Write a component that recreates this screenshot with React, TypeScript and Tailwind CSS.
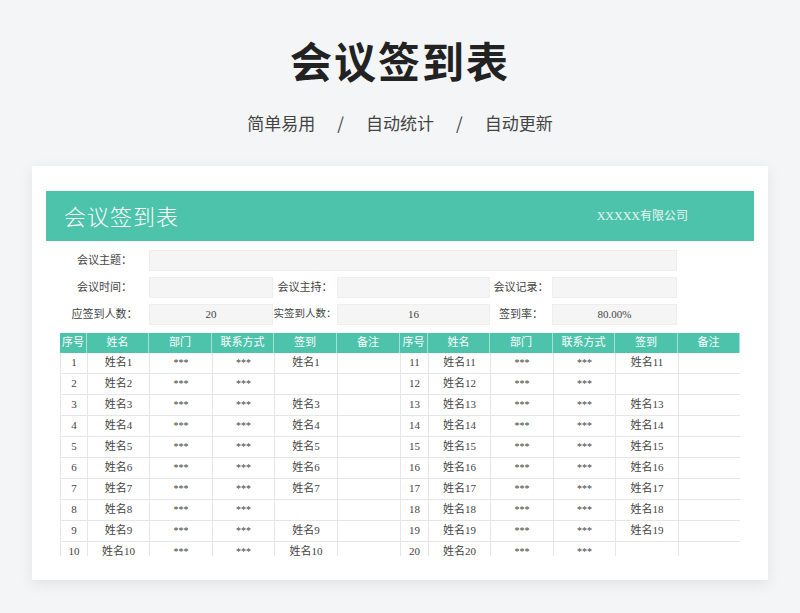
import React from 'react';

const cols = '27px 62px 63px 62px 63px 63px 28px 62px 63px 62px 63px 62px';
const heads = ['序号', '姓名', '部门', '联系方式', '签到', '备注'];
const signedLeft = [1, 3, 4, 5, 6, 7, 9, 10];
const signedRight = [11, 13, 14, 15, 16, 17, 18, 19];

const cell = 'flex items-center justify-center border-r border-b border-[#e6e6e6] whitespace-nowrap';

function Half({ n, signed }: { n: number; signed: boolean }) {
  return (
    <>
      <div className={cell}>{n}</div>
      <div className={cell}>姓名{n}</div>
      <div className={`${cell} text-[10px]`}>***</div>
      <div className={`${cell} text-[10px]`}>***</div>
      <div className={cell}>{signed ? `姓名${n}` : ''}</div>
      <div className={cell}></div>
    </>
  );
}

export default function App() {
  const font = { fontFamily: '"Liberation Serif", "Noto Sans CJK SC", serif' };
  return (
    <div className="w-[800px] h-[613px] bg-[#f3f5f7] flex flex-col items-center" style={{ fontFamily: '"Noto Sans CJK SC", sans-serif' }}>
      <h1 className="mt-[34px] text-[42px] leading-[52px] font-bold text-[#222] tracking-[2px]">会议签到表</h1>
      <div className="mt-[24px] flex items-center gap-[22px] text-[17px] text-[#444]">
        <span>简单易用</span><span>/</span><span>自动统计</span><span>/</span><span>自动更新</span>
      </div>
      <div className="mt-[30px] w-[736px] h-[414px] bg-white shadow-[0_4px_14px_rgba(0,0,0,0.08)] pt-[25px] px-[14px]" style={font}>
        <div className="h-[50px] bg-[#4dc3ab] flex items-center justify-between pl-[18px] pr-[66px] text-white">
          <span className="text-[22px] tracking-[1px]" style={{ fontFamily: '"Noto Sans CJK SC", sans-serif', fontWeight: 300 }}>会议签到表</span>
          <span className="text-[12px] text-[#e8f7f3]">XXXXX有限公司</span>
        </div>
        <div className="ml-[14px] mt-[9px] text-[11px] text-[#444] flex flex-col gap-[6px]">
          <div className="flex h-[21px]">
            <div className="w-[89px] flex items-center justify-center">会议主题：</div>
            <div className="w-[528px] bg-[#f5f5f5] border border-[#eee]"></div>
          </div>
          <div className="flex h-[21px]">
            <div className="w-[89px] flex items-center justify-center">会议时间：</div>
            <div className="w-[124px] bg-[#f5f5f5] border border-[#eee]"></div>
            <div className="w-[64px] flex items-center justify-center">会议主持：</div>
            <div className="w-[153px] bg-[#f5f5f5] border border-[#eee]"></div>
            <div className="w-[62px] flex items-center justify-center">会议记录：</div>
            <div className="w-[125px] bg-[#f5f5f5] border border-[#eee]"></div>
          </div>
          <div className="flex h-[21px]">
            <div className="w-[89px] flex items-center justify-center whitespace-nowrap">应签到人数：</div>
            <div className="w-[124px] bg-[#f5f5f5] border border-[#eee] flex items-center justify-center">20</div>
            <div className="w-[64px] flex items-center justify-center whitespace-nowrap text-[10.5px]">实签到人数：</div>
            <div className="w-[153px] bg-[#f5f5f5] border border-[#eee] flex items-center justify-center">16</div>
            <div className="w-[62px] flex items-center justify-center">签到率：</div>
            <div className="w-[125px] bg-[#f5f5f5] border border-[#eee] flex items-center justify-center">80.00%</div>
          </div>
        </div>
        <div className="ml-[14px] mt-[8px] w-[680px] h-[223px] overflow-hidden text-[11px] text-[#444]">
          <div className="grid h-[20px] bg-[#4dc3ab] text-white" style={{ gridTemplateColumns: cols }}>
            {[...heads, ...heads].map((h, i) => (
              <div key={i} className="flex items-center justify-center border-r border-[#a5e2d5] whitespace-nowrap">{h}</div>
            ))}
          </div>
          <div className="grid border-l border-[#e6e6e6]" style={{ gridTemplateColumns: cols, gridAutoRows: '21px' }}>
            {Array.from({ length: 10 }, (_, i) => (
              <React.Fragment key={i}>
                <Half n={i + 1} signed={signedLeft.includes(i + 1)} />
                <Half n={i + 11} signed={signedRight.includes(i + 11)} />
              </React.Fragment>
            ))}
          </div>
        </div>
      </div>
    </div>
  );
}
